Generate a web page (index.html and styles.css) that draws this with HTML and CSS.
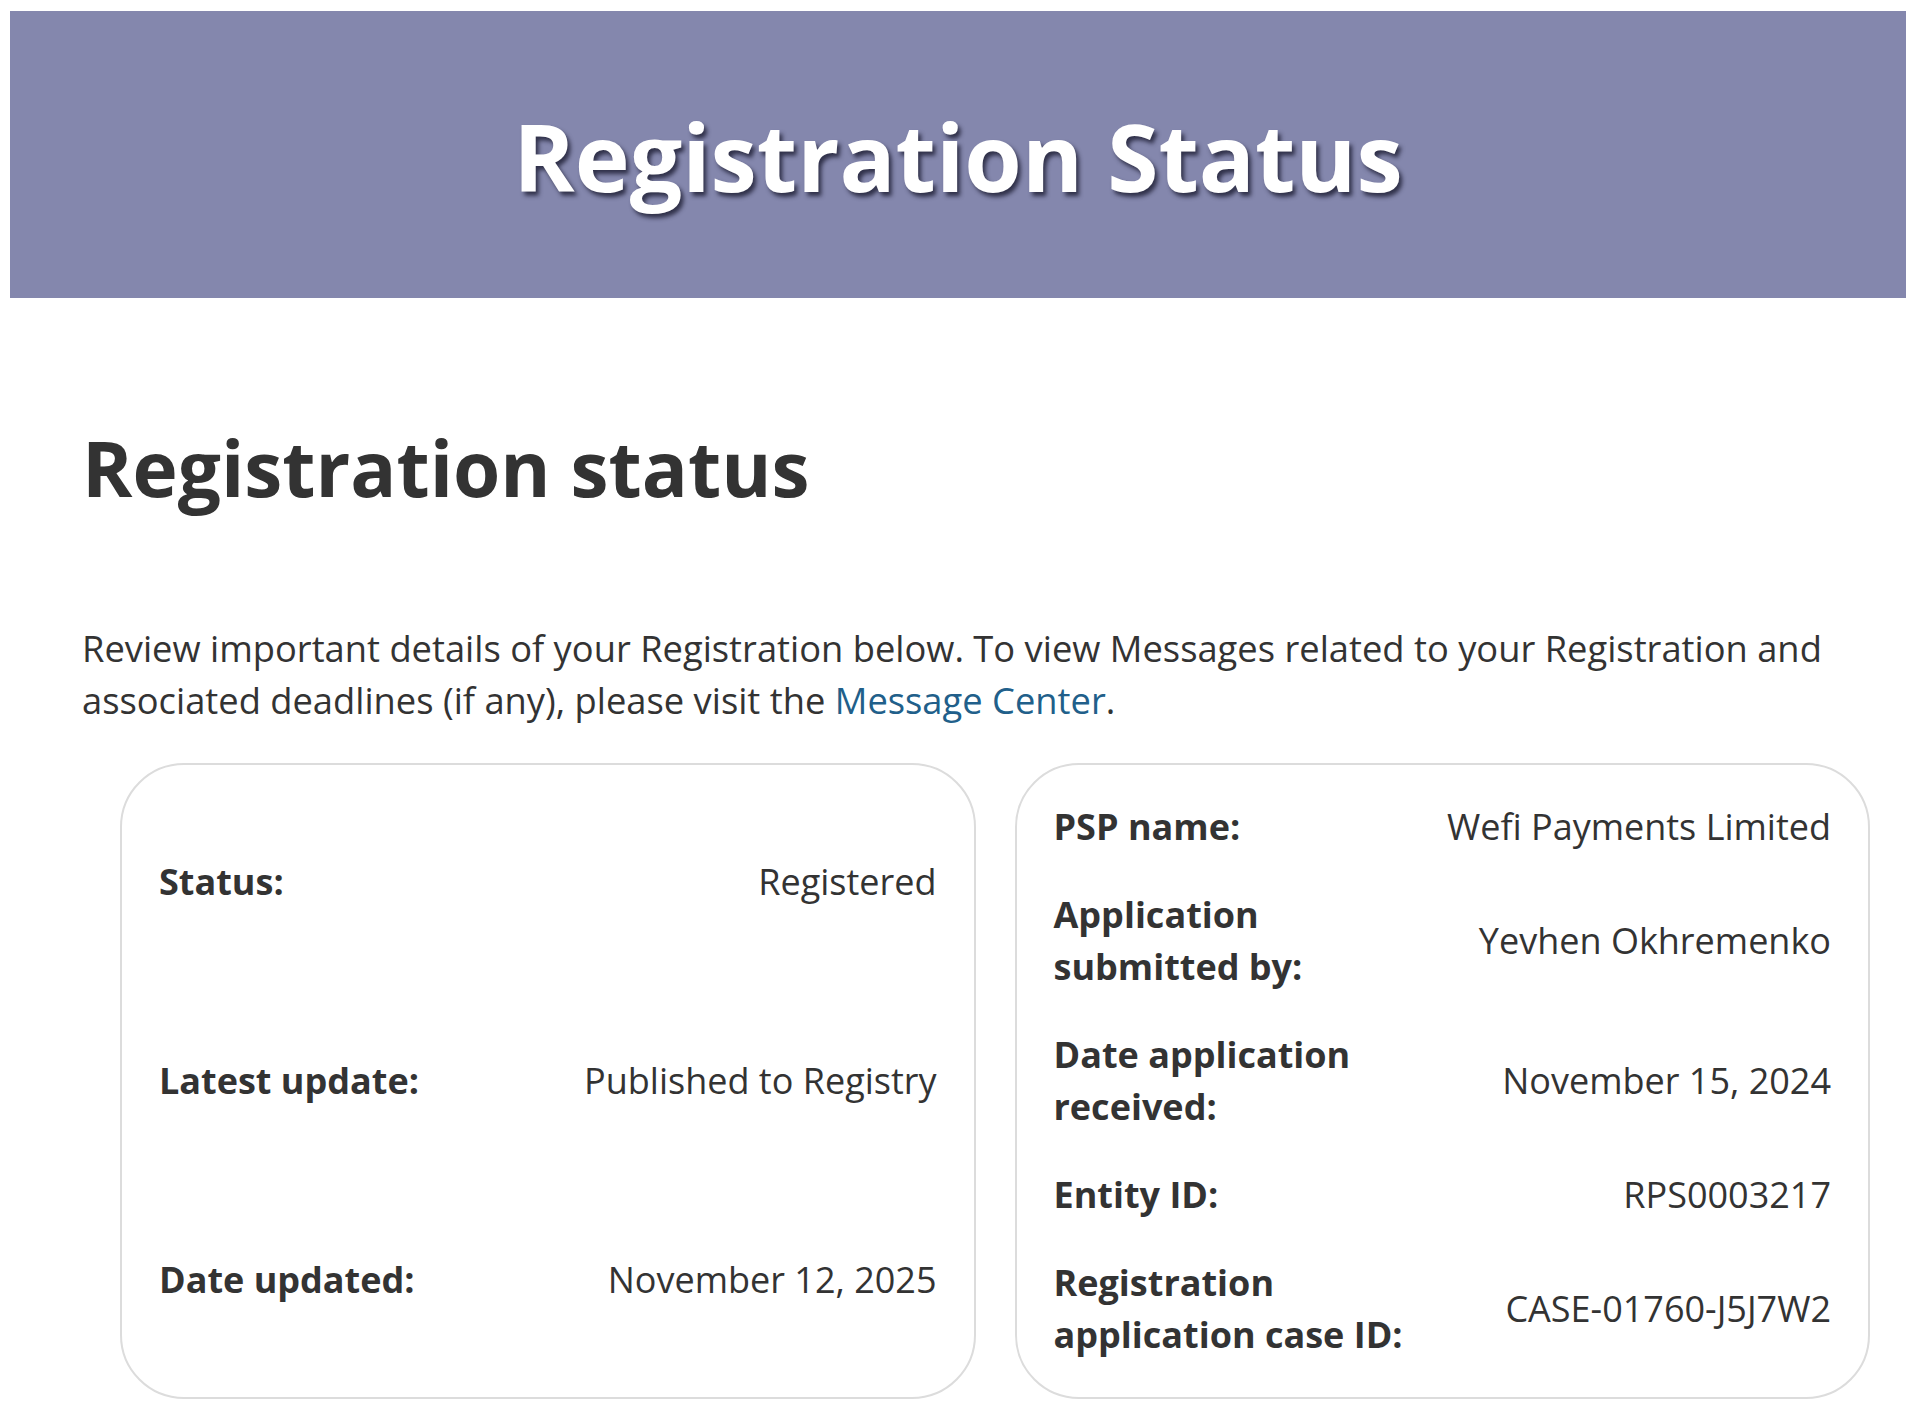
FILE: index.html
```html
<!DOCTYPE html>
<html lang="en">
<head>
<meta charset="utf-8">
<title>Registration Status</title>
<link rel="stylesheet" href="styles.css">
</head>
<body>
<header class="banner">
  <h1 class="banner-title">Registration Status</h1>
</header>
<main class="content">
  <h2 class="page-heading">Registration status</h2>
  <p class="intro">Review important details of your Registration below. To view Messages related to your Registration and associated deadlines (if any), please visit the <a class="link" href="#">Message Center</a>.</p>
  <div class="cards">
    <section class="card">
      <table class="details">
        <tr><th>Status:</th><td>Registered</td></tr>
        <tr><th>Latest update:</th><td>Published to Registry</td></tr>
        <tr><th>Date updated:</th><td>November 12, 2025</td></tr>
      </table>
    </section>
    <section class="card">
      <table class="details">
        <tr><th>PSP name:</th><td>Wefi Payments Limited</td></tr>
        <tr><th>Application submitted by:</th><td>Yevhen Okhremenko</td></tr>
        <tr><th>Date application received:</th><td>November 15, 2024</td></tr>
        <tr><th>Entity ID:</th><td>RPS0003217</td></tr>
        <tr><th>Registration application case ID:</th><td>CASE-01760-J5J7W2</td></tr>
      </table>
    </section>
  </div>
</main>
</body>
</html>
```

FILE: styles.css
```css
html, body {
  margin: 0;
  padding: 0;
  background: #ffffff;
}

body {
  font-family: "Open Sans", "Noto Sans", "Liberation Sans", sans-serif;
  color: #333333;
  padding-top: 11px;
  padding-left: 10px;
}

.banner {
  background: #8487ad;
  height: 287px;
  display: flex;
  align-items: center;
  justify-content: center;
}

.banner-title {
  margin: 0;
  color: #ffffff;
  font-size: 93px;
  font-weight: 700;
  line-height: 1;
  text-shadow: 3px 4px 4px rgba(20, 20, 40, 0.75);
  padding-top: 4px;
}

.content {
  padding: 0 36px 0 72px;
}

.page-heading {
  margin: 117px 0 0 0;
  font-size: 76.5px;
  font-weight: 700;
  line-height: 105px;
  color: #333333;
}

.intro {
  margin: 102px 0 0 0;
  font-size: 36.3px;
  line-height: 52px;
  color: #333333;
}

.link {
  color: #215f8a;
  text-decoration: none;
}

.cards {
  margin: 37px 0 12px 38px;
  display: grid;
  grid-template-columns: 1fr 1fr;
  gap: 39px;
}

.card {
  border: 2px solid #dcdcdc;
  border-radius: 64px;
  padding: 18px 37px;
  display: flex;
  flex-direction: column;
}

.details {
  flex: 1 1 auto;
  width: 100%;
  border-collapse: collapse;
  font-size: 36px;
  line-height: 52px;
}

.details th {
  width: 50%;
  text-align: left;
  font-weight: 700;
  padding: 18px 0;
  vertical-align: middle;
}

.details td {
  text-align: right;
  padding: 18px 0;
  vertical-align: middle;
}
```
